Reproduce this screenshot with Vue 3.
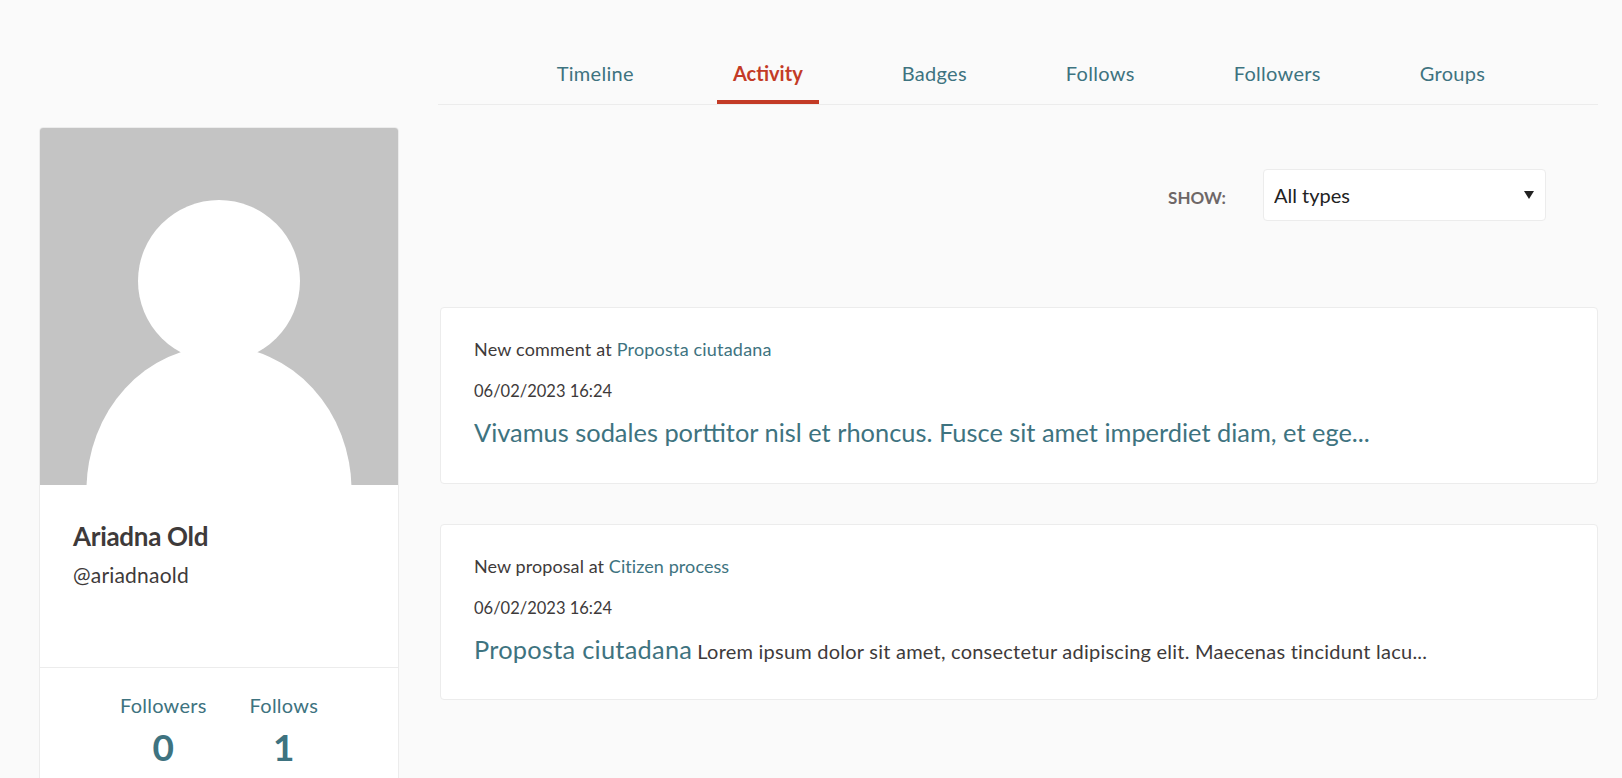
<script setup>
const tabs = ['Timeline', 'Activity', 'Badges', 'Follows', 'Followers', 'Groups']
</script>

<template>
  <div class="page">
    <aside class="side">
      <div class="card profile">
        <svg class="avatar" viewBox="0 0 358 357" width="358" height="357">
          <rect width="358" height="357" fill="#c4c4c4" />
          <ellipse cx="179" cy="362" rx="132.500" ry="144" fill="#fff" />
          <circle cx="179" cy="153" r="81" fill="#fff" />
        </svg>
        <div class="who">
          <div class="name">Ariadna Old</div>
          <div class="handle">@ariadnaold</div>
        </div>
        <div class="stats">
          <div class="stat"><a>Followers</a><b>0</b></div>
          <div class="stat"><a>Follows</a><b>1</b></div>
        </div>
      </div>
    </aside>
    <main class="main">
      <nav class="tabs">
        <a v-for="t in tabs" :key="t" class="tab" :class="{ active: t === 'Activity' }">{{ t }}</a>
      </nav>
      <div class="filter">
        <span class="show">SHOW:</span>
        <div class="select-wrap">
          <select class="select"><option>All types</option></select>
          <svg class="caret" width="10" height="8" viewBox="0 0 10 8"><path d="M0 0h10L5 8z" fill="#222" /></svg>
        </div>
      </div>
      <div class="feed">
        <article class="item first">
          <p class="meta">New comment at <a>Proposta ciutadana</a></p>
          <p class="date">06/02/2023 16:24</p>
          <p class="body"><a class="title">Vivamus sodales porttitor nisl et rhoncus. Fusce sit amet imperdiet diam, et ege...</a></p>
        </article>
        <article class="item">
          <p class="meta tight">New proposal at <a>Citizen process</a></p>
          <p class="date">06/02/2023 16:24</p>
          <p class="body"><a class="title wide">Proposta ciutadana</a> <span class="lorem">Lorem ipsum dolor sit amet, consectetur adipiscing elit. Maecenas tincidunt lacu...</span></p>
        </article>
      </div>
    </main>
  </div>
</template>

<style>
html, body { margin: 0; background: #fafafa; }
</style>

<style scoped>
.page {
  display: grid;
  grid-template-columns: 360px 1160px;
  column-gap: 39px;
  padding-left: 39px;
  height: 778px;
  overflow: hidden;
  box-sizing: border-box;
  background: #fafafa;
  color: #3e3a3a;
  font-family: Lato, "Noto Sans", sans-serif;
}
.side { padding-top: 127px; }
.card { background: #fff; border: 1px solid #ececec; border-radius: 4px; }
.profile { height: 700px; box-sizing: border-box; overflow: hidden; }
.avatar { display: block; }
.who { padding: 33px 33px 0; height: 183px; box-sizing: border-box; border-bottom: 1px solid #ececec; }
.name { font-size: 26px; line-height: 36px; font-weight: 700; letter-spacing: -0.3px; }
.handle { font-size: 21px; line-height: 28px; margin-top: 7px; letter-spacing: 0.2px; }
.stats { display: flex; justify-content: center; gap: 43px; padding-top: 23px; }
.stat { display: flex; flex-direction: column; align-items: center; }
.stat a { font-size: 20px; line-height: 28px; color: #3e7380; letter-spacing: 0.25px; }
.stat b { font-size: 37px; line-height: 50px; margin-top: 3px; color: #3e7380; font-weight: 700; }
.main { min-width: 0; }
.tabs { display: flex; justify-content: center; gap: 67px; height: 105px; box-sizing: border-box; padding: 59px 0 0 6px; border-bottom: 1px solid #ececec; }
.tab { font-size: 20px; line-height: 28px; height: 45px; padding: 0 16px; box-sizing: border-box; color: #3e7380; letter-spacing: 0.3px; }
.tab.active { color: #c33b26; font-weight: 700; border-bottom: 4px solid #c33b26; letter-spacing: 0; }
.filter { display: flex; justify-content: flex-end; align-items: center; gap: 37px; margin: 64px 52px 0 0; }
.show { font-size: 17px; font-weight: 700; color: #6e6767; padding-top: 4px; }
.select-wrap { position: relative; width: 283px; height: 52px; }
.select { appearance: none; width: 100%; height: 100%; box-sizing: border-box; background: #fff; border: 1px solid #ececec; border-radius: 4px; padding: 0 10px; font: 20px/28px Lato, sans-serif; color: #222; }
.caret { position: absolute; right: 12px; top: 22px; }
.feed { display: flex; flex-direction: column; gap: 40px; margin: 86px 0 0 2px; }
.item { background: #fff; border: 1px solid #ececec; border-radius: 4px; height: 176px; box-sizing: border-box; padding: 29px 33px 0; }
.item.first { height: 177px; }
.item p { margin: 0; }
.meta { font-size: 18px; line-height: 24px; letter-spacing: 0.19px; }
.meta.tight { letter-spacing: 0.08px; }
.date { font-size: 16.500px; line-height: 24px; margin-top: 18px !important; }
.body { font-size: 20px; line-height: 36px; margin-top: 11px !important; }
a { color: #3e7380; }
.title { font-size: 25.400px; }
.title.wide { letter-spacing: 0.250px; }
.lorem { letter-spacing: 0.230px; }
</style>
